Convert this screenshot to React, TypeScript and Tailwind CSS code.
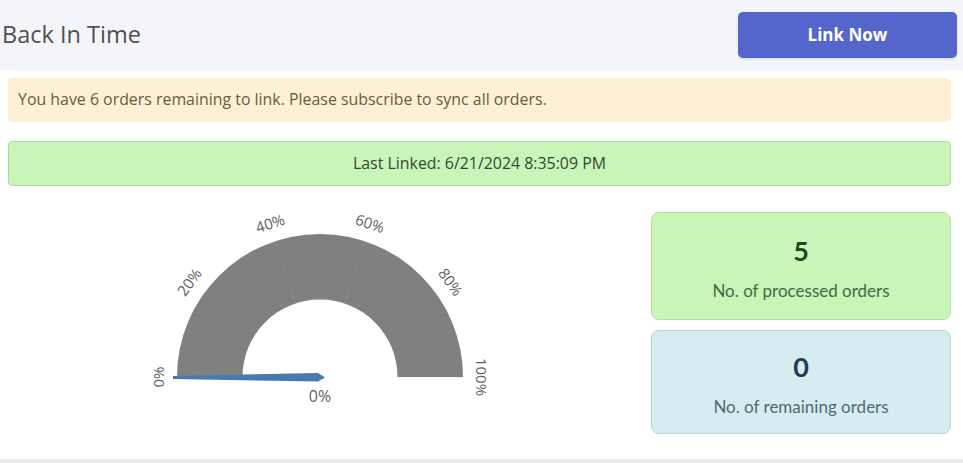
import React from 'react';

const CX = 320;
const CY = 191;
const R_OUT = 143;
const R_IN = 77.5;

function pt(r: number, p: number) {
  const a = Math.PI * (1 - p);
  return [CX + r * Math.cos(a), CY - r * Math.sin(a)];
}

function Gauge() {
  const ticks = [0, 0.2, 0.4, 0.6, 0.8, 1];
  const arc = `M ${CX - R_OUT} ${CY} A ${R_OUT} ${R_OUT} 0 0 1 ${CX + R_OUT} ${CY} L ${CX + R_IN} ${CY} A ${R_IN} ${R_IN} 0 0 0 ${CX - R_IN} ${CY} Z`;
  return (
    <svg width="651" height="273" className="shrink-0" style={{ fontFamily: '"Open Sans", sans-serif' }}>
      <path d={arc} fill="#808080" />
      {/* faint segment separators */}
      {[0.2, 0.4, 0.6, 0.8].map((p) => {
        const [x1, y1] = pt(R_IN, p);
        const [x2, y2] = pt(R_OUT, p);
        return <line key={p} x1={x1} y1={y1} x2={x2} y2={y2} stroke="#868686" strokeWidth="1" />;
      })}
      {ticks.map((p) => {
        const [x, y] = pt(160, p);
        return (
          <text
            key={p}
            x={x}
            y={y}
            fontSize="15"
            fill="#5f5f5f"
            textAnchor="middle"
            dominantBaseline="middle"
            transform={`rotate(${p * 180 - 90} ${x} ${y})`}
          >
            {Math.round(p * 100)}%
          </text>
        );
      })}
      {/* needle */}
      <polygon points="173,190 173,193 318,195.5 325,191.5 318,187" fill="#4a79b2" />
      <text x={CX} y={CY + 21} fontSize="16" fill="#5f5f5f" textAnchor="middle" dominantBaseline="middle">
        0%
      </text>
    </svg>
  );
}

export default function App() {
  return (
    <div className="w-[963px] h-[463px] bg-white flex flex-col overflow-hidden border-b-4 border-[#ececec]" style={{ fontFamily: '"Open Sans", sans-serif' }}>
      {/* header */}
      <div className="h-[70px] shrink-0 bg-[#f4f5fb] flex items-center justify-between pl-[2px] pr-[6px]">
        <h1 className="text-[23.5px] text-[#4f4f4f]">Back In Time</h1>
        <button className="w-[219px] h-[46px] rounded-[5px] bg-[#5466cc] text-white font-bold text-[17px] shadow-sm">
          Link Now
        </button>
      </div>

      <div className="pl-[8px] pr-[12px]">
        <div className="mt-[8px] h-[44px] rounded-[4px] bg-[#fdf0d5] flex items-center px-[10px] text-[15.9px] text-[#6a5c3c]">
          You have 6 orders remaining to link. Please subscribe to sync all orders.
        </div>
        <div className="mt-[19px] h-[45px] rounded-[4px] bg-[#c9f5b9] border border-[#a9dc99] flex items-center justify-center text-[15.9px] text-[#2f4a2f]">
          Last Linked: 6/21/2024 8:35:09 PM
        </div>
      </div>

      <div className="flex flex-1">
        <Gauge />
        <div className="flex flex-col gap-[10px] pt-[26px] w-[300px]" style={{ fontFamily: 'Lato, sans-serif' }}>
          <div className="h-[108px] rounded-[8px] bg-[#c9f5b9] border border-[#b2e2a3] flex flex-col items-center justify-center gap-[18px] pt-[4px]">
            <div className="text-[27px] leading-none font-bold text-[#1f4a22]">5</div>
            <div className="text-[17px] leading-none text-[#3f6b3f]">No. of processed orders</div>
          </div>
          <div className="h-[104px] rounded-[8px] bg-[#d7ecf1] border border-[#b3d4de] flex flex-col items-center justify-center gap-[18px] pt-[4px]">
            <div className="text-[27px] leading-none font-bold text-[#1e3f52]">0</div>
            <div className="text-[17px] leading-none text-[#4d6a77]">No. of remaining orders</div>
          </div>
        </div>
      </div>
    </div>
  );
}
